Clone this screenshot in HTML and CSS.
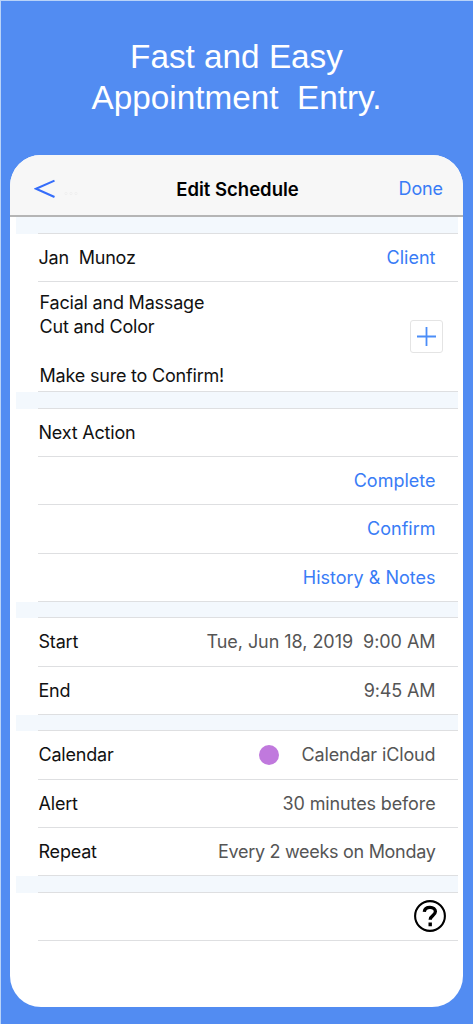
FILE: index.html
```html
<!DOCTYPE html>
<html lang="en">
<head>
<meta charset="utf-8">
<title>Edit Schedule</title>
<link rel="stylesheet" href="styles.css">
</head>
<body>
<div class="page">
  <h1 class="headline">Fast and Easy<br>Appointment&nbsp; Entry.</h1>
  <main class="card">
    <header class="navbar">
      <div class="back">
        <svg width="22" height="20" viewBox="0 0 22 20"><path d="M20.5 1.6 2 9.8 20.5 18" fill="none" stroke="#356dfa" stroke-width="2.1"/></svg>
        <svg class="dots" width="14" height="5" viewBox="0 0 14 5" fill="none" stroke="#efefef"><circle cx="2" cy="2.5" r="1.2"/><circle cx="7" cy="2.5" r="1.2"/><circle cx="12" cy="2.5" r="1.2"/></svg>
      </div>
      <h2 class="title">Edit Schedule</h2>
      <span class="link done">Done</span>
    </header>
    <div class="band first"></div>
    <section class="group">
      <div class="row"><span>Jan&nbsp; Munoz</span><span class="link">Client</span></div>
      <div class="row notes">
        <p class="memo">Facial and Massage<br>Cut and Color<br><br>Make sure to Confirm!</p>
        <span class="add"><svg width="21" height="21" viewBox="0 0 21 21"><path d="M1 10.5H20M10.5 1V20" fill="none" stroke="#4b8df8" stroke-width="1.8"/></svg></span>
      </div>
    </section>
    <div class="band"></div>
    <section class="group">
      <div class="row"><span>Next Action</span></div>
      <div class="row"><span class="link">Complete</span></div>
      <div class="row"><span class="link">Confirm</span></div>
      <div class="row"><span class="link">History &amp; Notes</span></div>
    </section>
    <div class="band"></div>
    <section class="group">
      <div class="row"><span>Start</span><span class="value date">Tue, Jun 18, 2019&nbsp; 9:00 AM</span></div>
      <div class="row"><span>End</span><span class="value">9:45 AM</span></div>
    </section>
    <div class="band"></div>
    <section class="group">
      <div class="row"><span>Calendar</span><span class="value calendar"><i class="dot"></i>Calendar iCloud</span></div>
      <div class="row"><span>Alert</span><span class="value">30 minutes before</span></div>
      <div class="row"><span>Repeat</span><span class="value repeat">Every 2 weeks on Monday</span></div>
    </section>
    <div class="band"></div>
    <section class="group">
      <div class="row help"><svg width="34" height="34" viewBox="0 0 34 34" fill="none" stroke="#000"><circle cx="17" cy="17" r="14.9" stroke-width="2.1"/><path d="M11.3 12.8C11.6 9.9 13.8 8.3 17 8.3C20.2 8.3 22.4 10 22.4 12.6C22.4 14.5 21.3 15.5 19.8 16.6C18 17.9 17.2 18.6 17.2 20.8" stroke-width="3.3"/><path d="M17.2 23.6V27.2" stroke-width="3.4"/></svg></div>
    </section>
  </main>
</div>
</body>
</html>
```

FILE: styles.css
```css
* { box-sizing: border-box; }
body { margin: 0; }
h1, h2, p { margin: 0; font-weight: 400; }
svg { display: block; flex: none; }

.page {
  width: 473px;
  height: 1024px;
  padding: 35px 10px 0 9px;
  background: #528cf2;
  border-top: 1px solid #b9d3f8;
  border-left: 1px solid #b9d3f8;
  font: 18px/24px Inter, sans-serif;
  letter-spacing: -0.2px;
  color: #111;
}
.headline {
  height: 119px;
  font: 33.3px/41px "Liberation Sans", sans-serif;
  letter-spacing: 0;
  text-align: center;
  color: #fff;
}
.card {
  width: 453px;
  height: 852px;
  border-radius: 31px;
  background: #fff;
  overflow: hidden;
}
.navbar {
  display: grid;
  grid-template-columns: 1fr auto 1fr;
  align-items: center;
  height: 62px;
  padding: 7.5px 20px 0 24px;
  background: #f7f7f7;
  border-bottom: 2px solid #b5b5b5;
}
.back { display: flex; align-items: center; gap: 8px; }
.dots { margin-top: 9px; }
.title { margin-left: -2px; font-weight: 600; font-size: 18.5px; line-height: 24px; letter-spacing: 0; color: #000; }
.done { justify-self: end; letter-spacing: -0.13px; }
.link { color: #397cf6; }
.row .link { margin-left: auto; letter-spacing: 0; }
.value { margin-left: auto; color: #555; letter-spacing: -0.13px; }
.value.date { letter-spacing: -0.05px; }
.value.repeat { letter-spacing: -0.3px; }

.band {
  height: 16.4px;
  margin: 0 5px 0 6px;
  background: #f3f8fd;
}
.band.first { height: 17px; }
.group {
  position: relative;
  margin: -1px 5px 0 28px;
  border-top: 1px solid #dedfe1;
}
.row {
  display: flex;
  align-items: center;
  height: 48.3px;
  padding: 1px 22.5px 0 0.5px;
  border-bottom: 1px solid #dedfe1;
}
.row.notes {
  justify-content: space-between;
  height: 110px;
  padding: 0 15px 0 1.5px;
}
.memo { padding-top: 5.5px; line-height: 24.2px; }
.add {
  display: flex;
  align-items: center;
  justify-content: center;
  width: 33px;
  height: 33px;
  border: 1.5px solid #e4e4e4;
  border-radius: 3px;
}
.calendar { display: flex; align-items: center; }
.dot { width: 20px; height: 20px; margin-right: 22px; border-radius: 50%; background: #c079dd; }
.row.help { justify-content: flex-end; padding: 0 11px 0 0; }
```
